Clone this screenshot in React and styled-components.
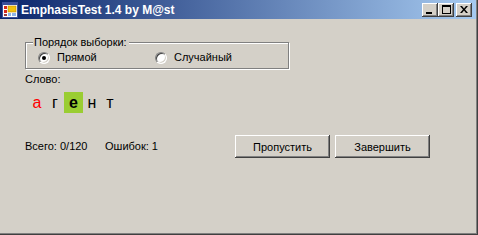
import React from 'react';
import styled, { createGlobalStyle } from 'styled-components';

const GlobalStyle = createGlobalStyle`
  html, body {
    margin: 0;
    padding: 0;
    background: #d4d0c8;
  }
  * {
    box-sizing: border-box;
  }
`;

const letters = [
  { ch: 'а', color: '#ff0000' },
  { ch: 'г' },
  { ch: 'е', active: true },
  { ch: 'н' },
  { ch: 'т' },
];

const AppIcon = () => (
  <svg width="16" height="16" viewBox="0 0 16 16">
    <rect x="0.5" y="0.5" width="15" height="15" fill="#fff" stroke="#3a4f9a" />
    <rect x="1" y="1" width="14" height="2" fill="#3a4f9a" />
    <rect x="2" y="4" width="3" height="3" fill="#d62a1e" />
    <rect x="2" y="8" width="3" height="3" fill="#d62a1e" />
    <rect x="2" y="12" width="3" height="2" fill="#9a3a3a" />
    <rect x="6" y="4" width="8" height="6" fill="#f4c20d" stroke="#c08a00" strokeWidth="0.6" />
    <rect x="6" y="11" width="3" height="3" fill="#8fb4e8" />
    <rect x="10" y="11" width="4" height="3" fill="#8fb4e8" />
  </svg>
);

const App = () => {
  return (
    <>
      <GlobalStyle />
      <Window>
        <TitleBar>
          <TitleLeft>
            <AppIcon />
            <TitleText>EmphasisTest 1.4 by M@st</TitleText>
          </TitleLeft>
          <CaptionButtons>
            <CaptionButton>
              <svg width="8" height="8" viewBox="0 0 8 8">
                <rect x="0" y="6" width="6" height="2" fill="#000" />
              </svg>
            </CaptionButton>
            <CaptionButton>
              <svg width="9" height="9" viewBox="0 0 9 9">
                <rect x="0.5" y="0.5" width="8" height="8" fill="none" stroke="#000" />
                <rect x="0" y="0" width="9" height="2" fill="#000" />
              </svg>
            </CaptionButton>
            <CaptionButton $gap>
              <svg width="8" height="7" viewBox="0 0 8 7">
                <path d="M0 0h2l2 2.5L6 0h2L5 3.5 8 7H6L4 4.5 2 7H0l3-3.5z" fill="#000" />
              </svg>
            </CaptionButton>
          </CaptionButtons>
        </TitleBar>

        <Client>
          <GroupBox>
            <GroupLegend>Порядок выборки:</GroupLegend>
            <RadioRow>
              <RadioItem $width={117}>
                <Radio $checked />
                <span>Прямой</span>
              </RadioItem>
              <RadioItem>
                <Radio />
                <span>Случайный</span>
              </RadioItem>
            </RadioRow>
          </GroupBox>

          <WordLabel>Слово:</WordLabel>
          <LetterRow>
            {letters.map((l, i) => (
              <Letter key={i} $color={l.color} $active={l.active}>
                {l.ch}
              </Letter>
            ))}
          </LetterRow>

          <BottomRow>
            <Stat $width={80}>Всего: 0/120</Stat>
            <Stat $width={130}>Ошибок: 1</Stat>
            <Buttons>
              <Button>Пропустить</Button>
              <Button>Завершить</Button>
            </Buttons>
          </BottomRow>
        </Client>
      </Window>
    </>
  );
};

const Window = styled.div`
  width: 478px;
  height: 235px;
  background: #d4d0c8;
  display: flex;
  flex-direction: column;
  font-family: 'Liberation Sans', Arial, sans-serif;
  font-size: 11px;
  color: #000;
  box-shadow: inset -1px -1px #404040, inset -2px -2px #808080;
`;

const TitleBar = styled.div`
  height: 19px;
  margin-right: 2px;
  display: flex;
  align-items: center;
  justify-content: space-between;
  padding: 0 4px 0 2px;
  background: linear-gradient(to right, #0a246a 0%, #a6caf0 100%);
`;

const TitleLeft = styled.div`
  display: flex;
  align-items: center;
  gap: 3px;
`;

const TitleText = styled.span`
  color: #fff;
  font-family: 'Liberation Sans', Arial, sans-serif;
  font-weight: bold;
  font-size: 12px;
  line-height: 14px;
`;

const CaptionButtons = styled.div`
  display: flex;
  align-items: center;
`;

const CaptionButton = styled.div`
  width: 16px;
  height: 14px;
  margin-left: ${(p) => (p.$gap ? '2px' : '0')};
  background: #d4d0c8;
  display: flex;
  align-items: center;
  justify-content: center;
  box-shadow: inset -1px -1px #404040, inset 1px 1px #fff, inset -2px -2px #808080;
`;

const Client = styled.div`
  flex: 1;
  display: flex;
  flex-direction: column;
  padding: 23px 0 0 25px;
`;

const GroupBox = styled.div`
  position: relative;
  width: 264px;
  height: 27px;
  border: 1px solid #808080;
  box-shadow: 1px 1px 0 #fff, inset 1px 1px 0 #fff;
`;

const GroupLegend = styled.span`
  position: absolute;
  left: 7px;
  top: -7px;
  padding: 0 2px 0 1px;
  background: #d4d0c8;
  line-height: 13px;
`;

const RadioRow = styled.div`
  display: flex;
  align-items: center;
  padding: 8px 0 0 12px;
`;

const RadioItem = styled.label`
  display: flex;
  align-items: center;
  gap: 7px;
  width: ${(p) => (p.$width ? `${p.$width}px` : 'auto')};
  line-height: 13px;
`;

const Radio = styled.span`
  position: relative;
  width: 12px;
  height: 12px;
  border-radius: 50%;
  background: #fff;
  border: 1px solid;
  border-color: #808080 #fff #fff #808080;
  box-shadow: inset 1px 1px #404040, inset -1px -1px #d4d0c8;

  &::after {
    content: '';
    display: ${(p) => (p.$checked ? 'block' : 'none')};
    position: absolute;
    left: 3px;
    top: 3px;
    width: 4px;
    height: 4px;
    border-radius: 50%;
    background: #000;
  }
`;

const WordLabel = styled.div`
  margin-top: 4px;
  line-height: 13px;
`;

const LetterRow = styled.div`
  display: flex;
  margin: 6px 0 0 3px;
`;

const Letter = styled.span`
  width: ${(p) => (p.$active ? '19px' : '18px')};
  height: 21px;
  display: flex;
  align-items: center;
  justify-content: center;
  font-size: 16px;
  font-weight: ${(p) => (p.$active ? 'bold' : 'normal')};
  color: ${(p) => p.$color || '#000'};
  background: ${(p) => (p.$active ? '#9acd32' : 'transparent')};
`;

const BottomRow = styled.div`
  display: flex;
  align-items: center;
  margin-top: 22px;
`;

const Stat = styled.span`
  width: ${(p) => p.$width}px;
  line-height: 13px;
`;

const Buttons = styled.div`
  display: flex;
  gap: 5px;
`;

const Button = styled.button`
  width: 95px;
  height: 23px;
  padding: 0;
  border: none;
  background: #d4d0c8;
  font-family: 'Liberation Sans', Arial, sans-serif;
  font-size: 11px;
  color: #000;
  box-shadow: inset -1px -1px #404040, inset 1px 1px #fff, inset -2px -2px #808080;
`;

export default App;
